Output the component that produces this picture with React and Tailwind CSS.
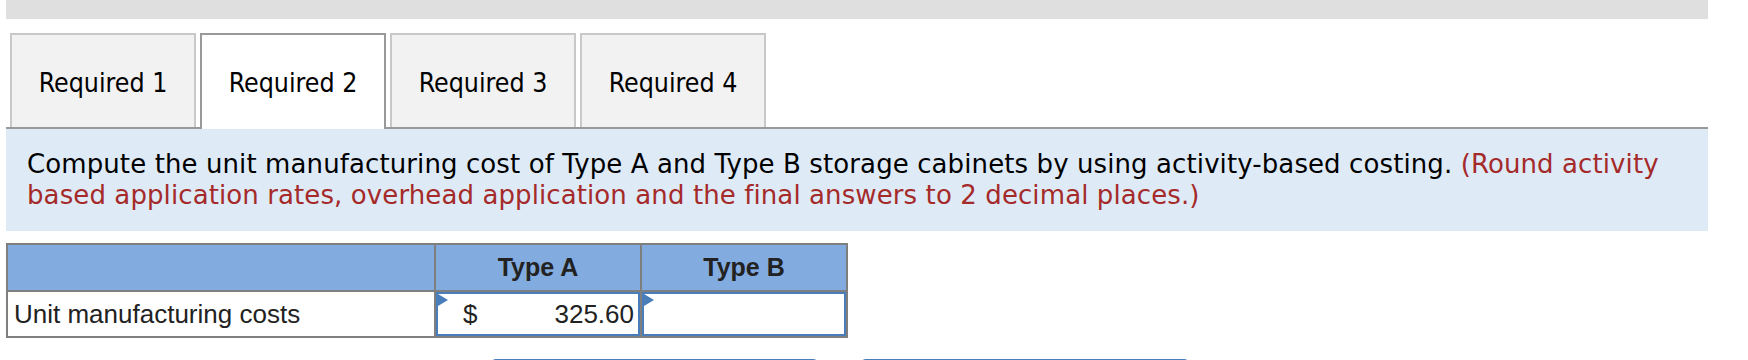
const TABS = ["Required 1", "Required 2", "Required 3", "Required 4"];

const tahoma = { fontFamily: '"DejaVu Sans Condensed", "DejaVu Sans", sans-serif' };
const verdana = { fontFamily: '"DejaVu Sans", Verdana, sans-serif' };

function Triangle() {
  return (
    <svg className="absolute left-0 top-0" width="10" height="12" viewBox="0 0 10 12">
      <polygon points="0,0 10,6 0,12" fill="#4a7ebb" />
    </svg>
  );
}

export default function App() {
  const active = 1;
  return (
    <div className="w-[1748px] h-[360px] bg-white overflow-hidden">
      <div className="ml-[6px] w-[1702px]">
        {/* top bar */}
        <div className="h-[19px] bg-[#dfdfdf]" />

        {/* tabs */}
        <div
          className="mt-[14px] flex items-end gap-[4px] pl-[4px] border-b-2 border-[#999]"
          style={tahoma}
        >
          {TABS.map((t, i) => (
            <div
              key={t}
              className={`w-[186px] flex items-center justify-center text-[26.5px] text-black ${
                i === active
                  ? "h-[96px] -mb-[2px] pt-[2px] bg-white border-2 border-b-0 border-[#999]"
                  : "h-[94px] pt-[4px] bg-[#f2f2f2] border-2 border-b-0 border-[#c8c8c8]"
              }`}
            >
              {t}
            </div>
          ))}
        </div>

        {/* instructions */}
        <div
          className="bg-[#deebf7] h-[102px] pl-[21px] pr-[20px] pt-[20px] text-[26px] tracking-[0.1px] leading-[31px] text-black"
          style={verdana}
        >
          Compute the unit manufacturing cost of Type A and Type B storage cabinets by using activity-based costing.{" "}
          <span className="text-[#a52a2a]">
            (Round activity based application rates, overhead application and the final answers to 2 decimal places.)
          </span>
        </div>

        {/* table */}
        <div className="mt-[12px] w-[842px] border-2 border-[#7f7f7f] font-['Liberation_Sans',Arial,sans-serif] text-[#222]">
          <div className="flex h-[47px] bg-[#82abdf] border-b-2 border-[#7f7f7f] text-[25px] font-bold">
            <div className="w-[428px] border-r-2 border-[#7f7f7f]" />
            <div className="w-[206px] border-r-2 border-[#7f7f7f] flex items-center justify-center">Type A</div>
            <div className="w-[204px] flex items-center justify-center">Type B</div>
          </div>
          <div className="flex h-[44px] text-[26px]">
            <div className="w-[428px] border-r-2 border-[#7f7f7f] flex items-center pl-[6px]">
              Unit manufacturing costs
            </div>
            <div className="w-[206px] border-r-2 border-[#7f7f7f] bg-white">
              <div className="relative h-full border-2 border-[#4a7ebb] flex items-center justify-between pl-[25px] pr-[4px]">
                <Triangle />
                <span>$</span>
                <span>325.60</span>
              </div>
            </div>
            <div className="w-[204px] bg-white">
              <div className="relative h-full border-2 border-[#4a7ebb]">
                <Triangle />
              </div>
            </div>
          </div>
        </div>

        {/* buttons (cut off) */}
        <div className="mt-[21px] flex gap-[41px] pl-[484px]">
          <div className="w-[329px] h-[40px] rounded-[6px] bg-[#4a7ebb]" />
          <div className="w-[330px] h-[40px] rounded-[6px] bg-[#4a7ebb]" />
        </div>
      </div>
    </div>
  );
}
